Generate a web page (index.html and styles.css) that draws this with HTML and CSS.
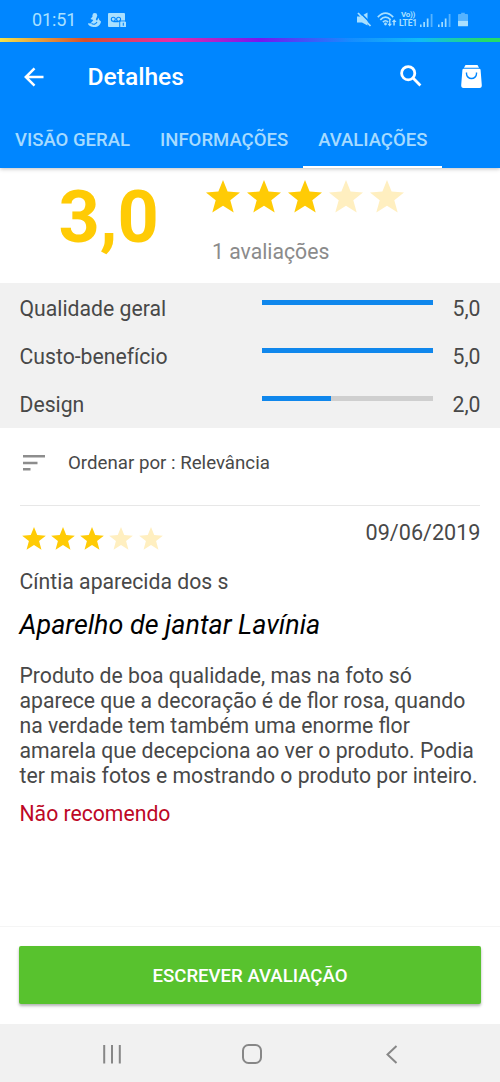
FILE: index.html
```html
<!DOCTYPE html>
<html lang="pt-BR">
<head>
<meta charset="utf-8">
<title>Detalhes</title>
<link rel="stylesheet" href="styles.css">
</head>
<body>
<svg class="defs" width="0" height="0" aria-hidden="true">
  <symbol id="star" viewBox="0 0 34 33"><path d="M17 0 21.600 11.500 34 12.400 24.300 20.200 27.700 32.500 17 25.800 6.300 32.500 9.700 20.200 0 12.400 12.400 11.500Z"/></symbol>
  <symbol id="signal" viewBox="0 0 13 14"><path opacity=".95" d="M0 11.500h1.600V14H0zM3.300 9h1.700v5H3.300zM6.800 5.500h1.700V14H6.800z"/><path opacity=".5" d="M10.700 1h1.800v13h-1.800z"/></symbol>
</svg>
<div class="screen">
  <header class="header">
    <div class="status">
      <span class="clock">01:51</span>
      <svg class="swan" width="13" height="14" viewBox="0 0 13 14"><circle cx="6.800" cy="2.500" r="2.400"/><path d="M5.800 2 8.800 3.500 7.800 6.500 9 7.800 10.500 4.800 11.300 7 13 8.500C12.600 12 10 14 6.500 14 3 14 .3 12.800 0 10.300l2.600.2C3.300 9.300 4.500 8.500 5.300 7L2.500 6Z"/><path class="cut" d="M3.500 10.500q3.500 2 5.500-1.500"/></svg>
      <svg width="18" height="14" viewBox="0 0 18 14"><path d="M1 0h15q1 0 1 1v12q0 1-1 1H1q-1 0-1-1V1q0-1 1-1Z"/><g class="cut"><circle cx="5.300" cy="6.300" r="2"/><circle cx="10.600" cy="6.300" r="2"/><path d="M5.300 8.600h5.300M11.800 14V8h6"/></g><path d="M12.600 8.800H18V14h-5.400Z"/><path class="cut" d="M15.300 9.800v3"/></svg>
      <div class="status-right">
        <svg width="15" height="15" viewBox="0 0 15 15"><path d="M0 4.500h3.500l7-4v13L5 10.500H0Z"/><path class="slash" d="M3 .5 15 12.500"/><path class="slash-line" d="M1 1 13.500 14"/></svg>
        <svg class="wifi" width="20" height="15" viewBox="0 0 20 15"><g class="line"><path d="M.8 5.200Q8.500-2.800 16.200 5.200M3.300 7.800Q8.500 2.400 13.700 7.800M5.900 10.100Q8.500 7.400 11.100 10.100"/></g><circle cx="8.500" cy="12" r="1.400"/><path d="M12.100 8h1.300v3.800h1.600L12.700 14.500 10.500 11.800h1.600ZM16.300 13.500V10h-1.500L17.200 7.200 19.500 10h-1.700v3.500Z"/></svg>
        <div class="volte"><span class="vo">Vo))</span><span class="lte">LTE1</span></div>
        <svg class="sig" width="13" height="14"><use href="#signal"/></svg>
        <svg class="sig" width="13" height="14"><use href="#signal"/></svg>
        <svg class="battery" width="10" height="15" viewBox="0 0 11 15"><path opacity=".5" d="M3.500 0h4v1.500H10q1 0 1 1V9H0V2.500q0-1 1-1h2.500Z"/><path d="M0 9h11v5q0 1-1 1H1q-1 0-1-1Z"/></svg>
      </div>
    </div>
    <div class="rainbow"></div>
    <div class="toolbar">
      <svg width="20" height="20" viewBox="0 0 20 20"><path class="back" d="M19.500 10H2M10.500 1.300 1.800 10l8.700 8.700"/></svg>
      <h1>Detalhes</h1>
      <svg class="search" width="22" height="22" viewBox="0 0 22 22"><circle cx="8.200" cy="8.200" r="6.600"/><path d="m12.800 12.800 7.600 7.600"/></svg>
      <svg class="bag" width="21" height="23" viewBox="0 0 21 23"><path d="M4.500 0h12L18 2.800H3ZM2.800 3.700h15.400q1.300 0 1.400 1.300L20.800 20q.2 3-2.300 3h-16Q0 23 .2 20L1.400 5q.1-1.300 1.400-1.300Z"/><path class="smile" d="M5.500 7.500v1.300a5 4.700 0 0 0 10 0V7.500"/></svg>
    </div>
    <nav class="tabs">
      <span class="tab">VISÃO GERAL</span>
      <span class="tab">INFORMAÇÕES</span>
      <span class="tab active">AVALIAÇÕES</span>
    </nav>
  </header>

  <section class="summary">
    <div class="score">3,0</div>
    <div class="score-side">
      <div class="stars large">
        <svg><use href="#star"/></svg><svg><use href="#star"/></svg><svg><use href="#star"/></svg><svg class="off"><use href="#star"/></svg><svg class="off"><use href="#star"/></svg>
      </div>
      <span class="count">1 avaliações</span>
    </div>
  </section>

  <section class="metrics">
    <div class="metric"><span>Qualidade geral</span><div class="bar"><div class="fill" style="width:100%"></div></div><span class="value">5,0</span></div>
    <div class="metric"><span>Custo-benefício</span><div class="bar"><div class="fill" style="width:100%"></div></div><span class="value">5,0</span></div>
    <div class="metric"><span>Design</span><div class="bar"><div class="fill" style="width:40.300%"></div></div><span class="value">2,0</span></div>
  </section>

  <div class="sort">
    <svg width="22" height="16" viewBox="0 0 22 16"><path d="M0 0h22v2.500H0zM0 6.800h14.500v2.400H0zM0 13h7.500v2.500H0z"/></svg>
    <span>Ordenar por : Relevância</span>
  </div>

  <article class="review">
    <div class="review-top">
      <div class="stars small">
        <svg><use href="#star"/></svg><svg><use href="#star"/></svg><svg><use href="#star"/></svg><svg class="off"><use href="#star"/></svg><svg class="off"><use href="#star"/></svg>
      </div>
      <time>09/06/2019</time>
    </div>
    <div class="author">Cíntia aparecida dos s</div>
    <h2>Aparelho de jantar Lavínia</h2>
    <p>Produto de boa qualidade, mas na foto só<br>aparece que a decoração é de flor rosa, quando<br>na verdade tem também uma enorme flor<br>amarela que decepciona ao ver o produto. Podia<br>ter mais fotos e mostrando o produto por inteiro.</p>
    <div class="verdict">Não recomendo</div>
  </article>

  <footer class="action"><button>ESCREVER AVALIAÇÃO</button></footer>

  <div class="navbar">
    <svg width="18" height="19" viewBox="0 0 18 19"><path d="M1.200 0v18.500M9 0v18.500M16.800 0v18.500"/></svg>
    <svg class="home" width="20" height="20" viewBox="0 0 20 20"><rect x="1" y="1" width="18" height="18" rx="5.500"/></svg>
    <svg width="12" height="19" viewBox="0 0 12 19"><path d="M10.500 1 1.500 9.500l9 8.500"/></svg>
  </div>
</div>
</body>
</html>
```
FILE: styles.css
```css
* { box-sizing: border-box; }
body { margin: 0; font-family: Roboto, "Liberation Sans", sans-serif; color: #484848; background: #fff; }
svg { display: block; flex: none; }
.defs { position: absolute; }
.screen { width: 500px; height: 1082px; display: flex; flex-direction: column; overflow: hidden; }

.header { height: 168px; flex: none; background: #0086ff; box-shadow: 0 1px 4px rgba(0,0,0,.25); display: flex; flex-direction: column; }
.status { height: 38px; padding: 1px 32px 0; display: flex; align-items: center; color: #a9e0ff; fill: #a9e0ff; }
.clock { font-size: 18px; line-height: 20px; width: 56px; padding-top: 1px; letter-spacing: -.1px; }
.swan { margin-right: 7px; }
.cut { fill: none; stroke: #0086ff; stroke-width: 1.1; }
.status-right { margin-left: auto; display: flex; align-items: center; }
.slash { stroke: #0086ff; stroke-width: 1.6; }
.slash-line { stroke: #a9e0ff; stroke-width: 1.8; }
.wifi { margin-left: 5px; }
.line { fill: none; stroke: #a9e0ff; stroke-width: 1.7; }
.volte { width: 20px; margin: -1px 0 0 1px; display: flex; flex-direction: column; align-items: center; font-size: 8px; line-height: 8px; font-weight: 700; }
.vo { letter-spacing: -.3px; }
.lte { font-size: 8.5px; letter-spacing: -.2px; }
.sig { margin-left: 2px; margin-top: 1px; }
.sig + .sig { margin-left: 5px; }
.battery { margin-left: 7px; }
.rainbow { height: 4px; background: linear-gradient(90deg, #f4e34b 0, #d8502b 17%, #e92ca5 34%, #7617ef 52%, #168cff 70%, #10bcf5 84%, #24dc69 97%); }
.toolbar { height: 70px; padding: 0 18.500px 0 24px; display: flex; align-items: center; color: #fff; }
.toolbar h1 { margin: 0 auto 0 43.500px; font-size: 24.6px; line-height: 30px; font-weight: 500; }
.back { fill: none; stroke: #fff; stroke-width: 2.5; }
.search { fill: none; stroke: #fff; stroke-width: 2.8; margin-right: 38.500px; margin-top: -3px; }
.bag { fill: #fff; margin-top: -2px; }
.smile { fill: none; stroke: #0086ff; stroke-width: 1.4; }
.tabs { height: 56px; display: flex; }
.tab { padding: 0 15px; height: 56px; line-height: 57px; font-size: 18.55px; font-weight: 500; color: #a6dbff; white-space: nowrap; }
.active { border-bottom: 2px solid #fff; }

.summary { height: 115px; flex: none; display: flex; padding-left: 58.500px; }
.score { width: 147.500px; padding-top: 1px; font-size: 72px; line-height: 98px; font-weight: 700; color: #ffcb05; }
.stars { display: flex; fill: #ffcb05; }
.off { fill: #ffefc0; }
.large { gap: 7px; padding-top: 12px; }
.large svg { width: 34px; height: 33px; }
.count { display: block; margin: 25px 0 0 6px; font-size: 21.2px; line-height: 27px; color: #8b8b8b; }

.metrics { height: 145px; flex: none; background: #f1f1f1; padding: 1px 19.5px 0; }
.metric { height: 48px; display: flex; font-size: 21.2px; line-height: 50px; }
.bar { width: 171px; height: 5px; margin: 16px 0 0 auto; background: #cfcfcf; }
.fill { height: 5px; background: #1087ec; }
.value { width: 47.5px; text-align: right; }

.sort { height: 78px; flex: none; margin: 0 20px; padding: 0 0 8px 3px; display: flex; align-items: center; gap: 23px; font-size: 18.7px; border-bottom: 1px solid #e7e7e7; fill: #8d8d8d; }

.review { flex: 1; padding: 0 19.5px; font-size: 21.2px; }
.review-top { display: flex; justify-content: space-between; height: 60px; }
.small { gap: 5.300px; padding: 21px 0 0 2px; }
.small svg { width: 24px; height: 23px; }
.review time { font-size: 21.600px; line-height: 54px; }
.author { line-height: 31px; }
.review h2 { margin: 11px 0 0; color: #000; font-size: 26.9px; line-height: 34px; font-style: italic; font-weight: 400; }
.review p { margin: 21px 0 0; font-size: 21.2px; line-height: 25px; white-space: nowrap; }
.verdict { margin-top: 11px; line-height: 30px; color: #bd0726; }

.action { height: 98px; flex: none; padding: 19px 19px 0; border-top: 1px solid #f5f5f5; }
.action button { display: block; width: 462px; height: 58px; border: 0; border-radius: 2px; background: #58c22e; color: #fff; font: 500 18.600px/60px Roboto, sans-serif; padding: 0; box-shadow: 0 2px 3px rgba(0,0,0,.3); }
.navbar { height: 58px; flex: none; background: #f1f1f1; padding: 2px 102px 0 103px; display: flex; align-items: center; justify-content: space-between; fill: none; stroke: #878787; stroke-width: 2; }
.home { margin-right: 4px; }
```
